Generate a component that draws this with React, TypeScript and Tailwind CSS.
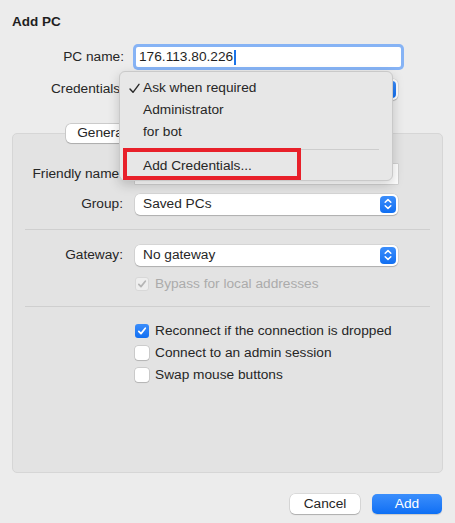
import React from "react";

const font = { fontFamily: '"Liberation Sans", Arial, sans-serif' };

function Stepper() {
  return (
    <div className="flex h-[17px] w-[16px] items-center justify-center rounded-[4px] bg-gradient-to-b from-[#3a8dfb] to-[#0f6ff2]">
      <svg width="8" height="12" viewBox="0 0 8 12" fill="none">
        <path d="M1.2 4.3 L4 1.6 L6.8 4.3" stroke="white" strokeWidth="1.5" strokeLinecap="round" strokeLinejoin="round" />
        <path d="M1.2 7.7 L4 10.4 L6.8 7.7" stroke="white" strokeWidth="1.5" strokeLinecap="round" strokeLinejoin="round" />
      </svg>
    </div>
  );
}

function Select({ value, width }: { value: string; width: string }) {
  return (
    <div
      className={`flex h-[21px] ${width} items-center justify-between rounded-[5px] bg-white pl-[8px] pr-[2px] shadow-[0_0_0_0.5px_rgba(0,0,0,0.12),0_1px_1px_rgba(0,0,0,0.18)]`}
    >
      <span className="text-[13.7px] leading-none text-[#262626]">{value}</span>
      <Stepper />
    </div>
  );
}

function Checkbox({ checked, disabled }: { checked?: boolean; disabled?: boolean }) {
  if (checked && !disabled) {
    return (
      <div className="flex h-[14px] w-[14px] items-center justify-center rounded-[3px] bg-gradient-to-b from-[#3a8dfb] to-[#0f6ff2]">
        <svg width="10" height="10" viewBox="0 0 10 10" fill="none">
          <path d="M1.8 5.3 L4 7.6 L8.3 2.2" stroke="white" strokeWidth="1.7" strokeLinecap="round" strokeLinejoin="round" />
        </svg>
      </div>
    );
  }
  if (checked && disabled) {
    return (
      <div className="flex h-[14px] w-[14px] items-center justify-center rounded-[3px] border border-[#d8d8d8] bg-[#eeeeee]">
        <svg width="10" height="10" viewBox="0 0 10 10" fill="none">
          <path d="M1.8 5.3 L4 7.6 L8.3 2.2" stroke="#b5b5b5" strokeWidth="1.7" strokeLinecap="round" strokeLinejoin="round" />
        </svg>
      </div>
    );
  }
  return (
    <div className="h-[14px] w-[14px] rounded-[3px] bg-white shadow-[0_0_0_0.5px_rgba(0,0,0,0.2),0_1px_1px_rgba(0,0,0,0.12)]" />
  );
}

function PanelRow({ label, children }: { label: string; children: React.ReactNode }) {
  return (
    <div className="flex h-[22px] items-center">
      <div className="w-[111px] pr-[1px] text-right text-[13.7px] text-[#262626]">{label}</div>
      <div className="ml-[11px]">{children}</div>
    </div>
  );
}

function CheckRow({ label, checked, disabled }: { label: string; checked?: boolean; disabled?: boolean }) {
  return (
    <div className="ml-[122px] flex h-[18px] items-center gap-[6px]">
      <Checkbox checked={checked} disabled={disabled} />
      <span className={`text-[13.7px] ${disabled ? "text-[#ababab]" : "text-[#262626]"}`}>{label}</span>
    </div>
  );
}

export default function App() {
  return (
    <div className="relative h-[523px] w-[455px] overflow-hidden bg-[#ececec]" style={font}>
      {/* Title */}
      <div className="pl-[12px] pt-[14px] text-[13.5px] font-bold leading-[16px] text-[#1f1f1f]">Add PC</div>

      {/* PC name */}
      <div className="mt-[16px] flex h-[22px] items-center">
        <div className="w-[124px] text-right text-[13.7px] text-[#262626]">PC name:</div>
        <div className="ml-[12px] flex h-[20px] w-[265px] items-center rounded-[2px] bg-white pl-[3px] ring-[3px] ring-[#86b3f5]">
          <span className="text-[13.7px] leading-none text-[#1f1f1f]">176.113.80.226</span>
          <span className="ml-[1px] h-[15px] w-[1.5px] bg-[#1a73e8]" />
        </div>
      </div>

      {/* Credentials */}
      <div className="mt-[10px] flex h-[22px] items-center">
        <div className="w-[124px] text-right text-[13.7px] text-[#262626]">Credentials:</div>
        <div className="ml-[10px]">
          <Select value="Ask when required" width="w-[264px]" />
        </div>
      </div>

      {/* Tabs (mostly hidden behind the menu) */}
      <div className="relative z-10 mt-[23px] flex justify-center">
        <div className="flex h-[21px] w-[326px] items-center rounded-[6px] bg-[#dcdcdc] p-[1px] text-[13.7px] text-[#262626]">
          <div className="flex h-[19px] w-[72px] items-center justify-center rounded-[5px] bg-white shadow-[0_0_0_0.5px_rgba(0,0,0,0.15),0_1px_1px_rgba(0,0,0,0.15)]">
            General
          </div>
        </div>
      </div>

      {/* Panel */}
      <div className="mx-[12px] -mt-[11px] h-[340px] rounded-[5px] border border-[#d6d6d6] bg-[#e3e3e3] pt-[29px]">
        <PanelRow label="Friendly name:">
          <div className="h-[20px] w-[263px] bg-white shadow-[0_0_0_0.5px_rgba(0,0,0,0.15)]" />
        </PanelRow>
        <div className="mt-[8px]">
          <PanelRow label="Group:">
            <Select value="Saved PCs" width="w-[263px]" />
          </PanelRow>
        </div>

        <div className="mx-[12px] mt-[14px] h-px bg-[#cfcfcf]" />

        <div className="mt-[14px]">
          <PanelRow label="Gateway:">
            <Select value="No gateway" width="w-[263px]" />
          </PanelRow>
        </div>
        <div className="mt-[9px]">
          <CheckRow label="Bypass for local addresses" checked disabled />
        </div>

        <div className="mx-[12px] mt-[13px] h-px bg-[#cfcfcf]" />

        <div className="mt-[15px] flex flex-col gap-[4px]">
          <CheckRow label="Reconnect if the connection is dropped" checked />
          <CheckRow label="Connect to an admin session" />
          <CheckRow label="Swap mouse buttons" />
        </div>
      </div>

      {/* Buttons */}
      <div className="mt-[21px] flex justify-end gap-[12px] pr-[13px]">
        <button className="h-[20px] w-[70px] rounded-[5px] bg-white text-[13.7px] text-[#262626] shadow-[0_0_0_0.5px_rgba(0,0,0,0.15),0_1px_1px_rgba(0,0,0,0.2)]">
          Cancel
        </button>
        <button className="h-[20px] w-[70px] rounded-[5px] bg-gradient-to-b from-[#3a8efc] to-[#0c6ff4] text-[13.7px] text-white shadow-[0_1px_1px_rgba(0,0,0,0.15)]">
          Add
        </button>
      </div>

      {/* Credentials popup menu */}
      <div className="absolute left-[119px] top-[71px] z-20 h-[110px] w-[274px] rounded-[6px] border border-[#c9c9c9] bg-[#e7e7e7] pt-[5px] shadow-[0_4px_12px_rgba(0,0,0,0.18)]">
        <div className="flex h-[22px] items-center">
          <div className="flex w-[23px] justify-end pr-[3px]">
            <svg width="11" height="11" viewBox="0 0 11 11" fill="none">
              <path d="M1 6 L4 9.3 L10 1.3" stroke="#262626" strokeWidth="1.4" strokeLinecap="round" strokeLinejoin="round" />
            </svg>
          </div>
          <span className="text-[13.7px] text-[#262626]">Ask when required</span>
        </div>
        <div className="flex h-[22px] items-center pl-[23px] text-[13.7px] text-[#262626]">Administrator</div>
        <div className="flex h-[22px] items-center pl-[23px] text-[13.7px] text-[#262626]">for bot</div>
        <div className="flex h-[12px] items-center px-[13px]">
          <div className="h-px w-full bg-[#cdcdcd]" />
        </div>
        <div className="flex h-[22px] items-center pl-[23px] text-[13.7px] text-[#262626]">Add Credentials...</div>
      </div>

      {/* Red highlight box */}
      <div className="absolute left-[123px] top-[148px] z-30 h-[32px] w-[178px] border-4 border-[#e8202a]" />
    </div>
  );
}
